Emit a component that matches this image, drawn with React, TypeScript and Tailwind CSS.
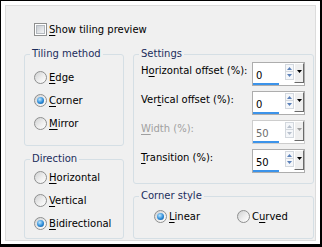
import React from "react";

function Radio({ checked }: { checked?: boolean }) {
  return (
    <span className="flex h-[13px] w-[13px] shrink-0 items-center justify-center rounded-full border border-[#8e8f8f] bg-[linear-gradient(135deg,#cfd0d1,#eeeeee_55%,#ffffff)]">
      {checked && (
        <span className="h-[7px] w-[7px] rounded-full bg-[radial-gradient(circle_at_40%_35%,#bfe8ff,#2c8bd8_55%,#0b4a86)]" />
      )}
    </span>
  );
}

function Group({
  title,
  className,
  children,
}: {
  title: string;
  className: string;
  children?: React.ReactNode;
}) {
  return (
    <div className={`relative rounded-[3px] border border-[#d5dfe5] ${className}`}>
      <span className="absolute -top-[8px] left-[5px] bg-[#f0f0f0] px-[2px] leading-[13px] text-[#1b2d5c]">
        {title}
      </span>
      {children}
    </div>
  );
}

function RadioRow({
  checked,
  pre,
  u,
  post,
  className,
}: {
  checked?: boolean;
  pre?: string;
  u: string;
  post: string;
  className?: string;
}) {
  return (
    <div className={`flex h-[23px] items-center ${className ?? ""}`}>
      <Radio checked={checked} />
      <span className="ml-[2px] whitespace-nowrap">
        {pre}
        <span className="underline decoration-1 underline-offset-[2px]">{u}</span>
        {post}
      </span>
    </div>
  );
}

function Spin({ value, disabled }: { value: string; disabled?: boolean }) {
  return (
    <div
      className={`flex h-[24px] w-[53px] shrink-0 border bg-white ${
        disabled ? "border-[#cdcdcd]" : "border-[#adadad]"
      }`}
    >
      <div className="flex w-[32px] flex-col">
        <span
          className={`pl-[3px] pt-[6px] leading-[13px] ${
            disabled ? "text-[#6d6d6d]" : "text-black"
          }`}
        >
          {value}
        </span>
        <div className="mt-[1px] h-[2px] w-[26px] bg-[#3b93ea]" />
      </div>
      <div className="mt-[1px] flex w-[9px] flex-col">
        <div className="flex h-[8px] w-[9px] items-center justify-center border border-[#d3d8de] bg-[#f5f7fa]">
          <svg width="5" height="3" viewBox="0 0 5 3">
            <path d="M2.5 0 L5 3 L0 3 Z" fill={disabled ? "#b8c0cc" : "#5b80b8"} />
          </svg>
        </div>
        <div className="flex h-[8px] w-[9px] items-center justify-center border border-t-0 border-[#d3d8de] bg-[#f5f7fa]">
          <svg width="5" height="3" viewBox="0 0 5 3">
            <path d="M0 0 L5 0 L2.5 3 Z" fill={disabled ? "#b8c0cc" : "#5b80b8"} />
          </svg>
        </div>
      </div>
      <div className="flex h-[20px] w-[10px] items-start justify-center border-b border-r border-l border-t border-b-[#6a6a6a] border-r-[#6a6a6a] border-l-[#ffffff] border-t-[#ffffff] bg-[#efefef] pt-[6px]">
        <svg width="5" height="3" viewBox="0 0 5 3">
          <path d="M0 0 L5 0 L2.5 3 Z" fill={disabled ? "#a0a0a0" : "#000000"} />
        </svg>
      </div>
    </div>
  );
}

function SettingRow({
  pre,
  u,
  post,
  value,
  disabled,
  className,
}: {
  pre?: string;
  u: string;
  post: string;
  value: string;
  disabled?: boolean;
  className?: string;
}) {
  return (
    <div className={`flex h-[24px] items-start justify-between ${className ?? ""}`}>
      <span
        className={`whitespace-nowrap pt-[2px] ${disabled ? "text-[#a0a0a0]" : "text-black"}`}
      >
        {pre}
        <span className="underline decoration-1 underline-offset-[2px]">{u}</span>
        {post}
      </span>
      <Spin value={value} disabled={disabled} />
    </div>
  );
}

export default function App() {
  return (
    <div className="h-[247px] w-[322px] border-b-[3px] border-l border-r-2 border-t border-black bg-white pb-[3px] pl-[4px] pr-[4px] pt-[4px] font-['DejaVu_Sans',sans-serif] text-[10px] leading-[13px] text-black">
      <div className="flex h-full flex-col border border-[#dcdcdc] bg-[#f0f0f0] pl-[18px] pr-[1px] pt-[17px]">
        <div className="ml-[10px] flex h-[13px] items-center">
          <span className="flex h-[13px] w-[13px] items-center justify-center border border-[#8e8f8f] bg-white">
            <span className="h-[9px] w-[9px] border border-[#b4b9bf] bg-[linear-gradient(135deg,#c9cdd2,#f3f4f5)]" />
          </span>
          <span className="ml-[2px] whitespace-nowrap">
            <span className="underline decoration-1 underline-offset-[2px]">S</span>how tiling preview
          </span>
        </div>
        <div className="mt-[18px] flex gap-[9px]">
          <div className="flex w-[100px] flex-col gap-[13px]">
            <Group title="Tiling method" className="h-[92px] pl-[9px] pt-[11px]">
              <RadioRow u="E" post="dge" />
              <RadioRow checked u="C" post="orner" />
              <RadioRow u="M" post="irror" />
            </Group>
            <Group title="Direction" className="h-[80px] pl-[9px] pt-[6px]">
              <RadioRow u="H" post="orizontal" />
              <RadioRow u="V" post="ertical" />
              <RadioRow checked u="B" post="idirectional" />
            </Group>
          </div>
          <div className="flex w-[181px] flex-col gap-[12px]">
            <Group title="Settings" className="h-[130px] pl-[7px] pr-[8px] pt-[7px]">
              <SettingRow pre="H" u="o" post="rizontal offset (%):" value="0" />
              <SettingRow className="mt-[5px]" pre="Ver" u="t" post="ical offset (%):" value="0" />
              <SettingRow className="mt-[5px]" u="W" post="idth (%):" value="50" disabled />
              <SettingRow className="mt-[5px]" u="T" post="ransition (%):" value="50" />
            </Group>
            <Group title="Corner style" className="flex h-[43px] pl-[20px] pt-[8px]">
              <RadioRow checked u="L" post="inear" className="w-[83px]" />
              <RadioRow pre="C" u="u" post="rved" />
            </Group>
          </div>
        </div>
      </div>
    </div>
  );
}
